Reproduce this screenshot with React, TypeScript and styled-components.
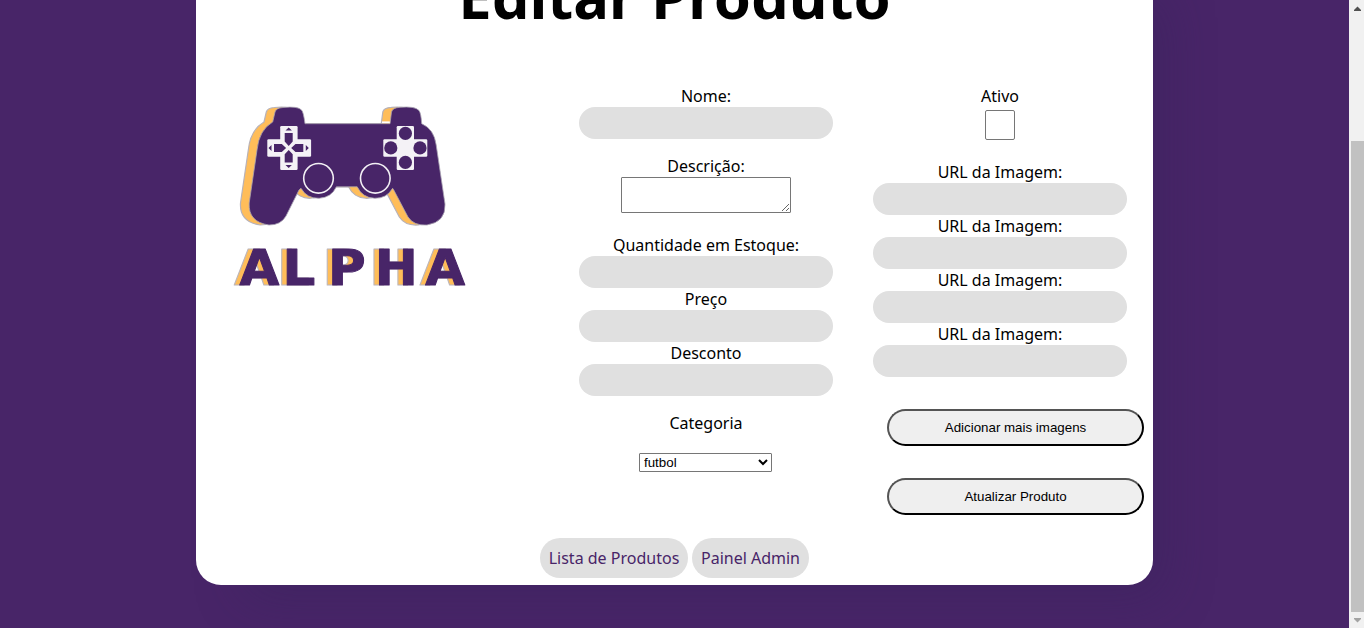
import React from 'react';
import styled, { createGlobalStyle } from 'styled-components';

const GlobalStyle = createGlobalStyle`
  * { box-sizing: border-box; }
  body {
    margin: 0;
    overflow: hidden;
    background: #482568;
    color: #000;
    font: 16px/22px "Noto Sans", sans-serif;
  }
`;

const Screen = styled.div`
  display: flex;
  height: 628px;
  overflow: hidden;
`;

const Page = styled.main`
  flex: 1;
  display: flex;
  justify-content: center;
  align-items: flex-start;
  overflow: hidden;
`;

const Card = styled.section`
  width: 957px;
  height: 635px;
  margin-top: -50px;
  background: #fff;
  border-radius: 25px;
  box-shadow: 30px 30px 50px -20px rgba(50, 35, 85, 0.35);
`;

const Title = styled.h1`
  margin: 0 0 44px;
  font-size: 59.7px;
  line-height: 91px;
  text-align: center;
`;

const Form = styled.form`
  display: flex;
  height: 453px;
`;

const LogoArea = styled.div`
  width: 383px;
  padding: 10px 0 0 29px;
`;

const Column = styled.div`
  display: flex;
  flex-direction: column;
  align-items: center;
  width: 254px;
  & + & { margin-left: 40px; }
`;

const Field = styled.label<{ $after?: number }>`
  display: flex;
  flex-direction: column;
  align-items: center;
  margin-bottom: ${(p) => p.$after ?? 0}px;
`;

const Input = styled.input`
  width: 254px;
  height: 32px;
  padding: 0 12px;
  border: 0;
  border-radius: 16px;
  background: #e0e0e0;
`;

const Description = styled.textarea`
  width: 170px;
  height: 36px;
  margin: 0;
  border: 1px solid #767676;
  border-radius: 1px;
`;

const Check = styled.input`
  width: 30px;
  height: 30px;
  margin: 3px 0 0;
  appearance: none;
  border: 1px solid #767676;
  border-radius: 2px;
`;

const Category = styled.select`
  width: 133px;
  height: 19px;
  margin: 19px 1px 0 0;
  border: 1px solid #767676;
  border-radius: 1px;
  background: #fff;
  color: #000;
  font: 13.333px "Liberation Sans", Arial, sans-serif;
`;

const Action = styled.button`
  flex: none;
  align-self: flex-start;
  width: 257px;
  height: 37px;
  margin: 32px 0 0 14px;
  border: 2px outset #000;
  border-radius: 20px;
  background: #efefef;
  color: #000;
  font: 13.333px "Liberation Sans", Arial, sans-serif;
`;

const Links = styled.nav`
  display: flex;
  justify-content: center;
  gap: 4px;
`;

const PillLink = styled.a<{ $width: number }>`
  width: ${(p) => p.$width}px;
  height: 40px;
  border-radius: 20px;
  background: #e0e0e0;
  color: #482568;
  line-height: 40px;
  text-align: center;
  white-space: nowrap;
  text-decoration: none;
`;

const ScrollTrack = styled.aside`
  display: flex;
  flex-direction: column;
  width: 15px;
  background: #f1f1f1;
`;

const ScrollArrow = styled.svg`
  display: block;
  flex: none;
`;

const ScrollThumb = styled.div`
  height: 471px;
  margin: 124px 0 0 2px;
  background: #c1c1c1;
`;

const controller =
  'M272.7 122 L275 112 Q276 108 283 107.5 Q298 106 301.5 110 Q303.5 112 305 123.7 H390 L391.5 112 Q392.5 107.7 400 107.3 Q415 106 419 110.5 Q421 113 421.7 123.7 Q434 129 436.2 145 L445 204 Q446 222 427 225 Q414 226 408 217 L393.5 189.5 L392.6 188.3 A20 20 0 0 1 357.2 186.8 H336.4 A20 20 0 0 1 301 188.3 L299 190 L286 216 Q281 225 269 225 Q248 222 249.2 203 L257 150 Q259 130 272.7 122 Z';

function Wordmark({ offset, fill, stroke }: { offset: number; fill: string; stroke: string }) {
  return (
    <text
      transform={`translate(${offset} 285) scale(1.05 1)`}
      x="228 269 312.5 357 405"
      y="0"
      fontFamily="DejaVu Sans"
      fontWeight="bold"
      fontSize="49"
      fill={fill}
      stroke={stroke}
      strokeWidth="1"
      strokeLinejoin="round"
    >
      ALPHA
    </text>
  );
}

function Logo() {
  return (
    <svg width="250" height="200" viewBox="225 95 250 200" role="img" aria-label="Alpha">
      <path d={controller} transform="translate(-8.7 0)" fill="#ffbd59" stroke="#b8b2b8" strokeWidth="1.2" />
      <path d={controller} fill="#482568" stroke="#aaa3b2" strokeWidth="0.8" />
      <path d="M382 121.4h7.8v1.7H382z" fill="#fff" />
      <g fill="#f4f2f6">
        <rect x="280.2" y="126" width="17.4" height="44" rx="1.2" />
        <rect x="267.3" y="139.2" width="43.8" height="17.6" rx="1.2" />
        <rect x="396.7" y="126" width="17.3" height="44" rx="1.2" />
        <rect x="383.3" y="139.2" width="44" height="17.6" rx="1.2" />
      </g>
      <g fill="#482568">
        <path d="M284.7 133h8v8.6l-4 4.3-4-4.3zM284.7 162.5h8v-8.2l-4-4.3-4 4.3zM274 144h7.8l4.3 4-4.3 4H274zM303.3 144h-7.8l-4.3 4 4.3 4h7.8z" />
        <path d="M285.5 130.6l3.2-3 3.2 3zM285.5 165l3.2 3 3.2-3zM271.5 145l-3 3 3 3zM305.8 145l3 3-3 3z" />
      </g>
      <g fill="#482568">
        <circle cx="405.4" cy="133.4" r="6.6" />
        <circle cx="390.8" cy="147.9" r="6.6" />
        <circle cx="420" cy="147.9" r="6.6" />
        <circle cx="405.4" cy="162.4" r="6.6" />
      </g>
      <g fill="none" stroke="#f2eff4" strokeWidth="1.6">
        <circle cx="318.5" cy="178.3" r="14.8" />
        <circle cx="375.3" cy="178.3" r="14.8" />
      </g>
      <Wordmark offset={-5.5} fill="#ffbd59" stroke="#bdb6ba" />
      <Wordmark offset={0} fill="#482568" stroke="#482568" />
    </svg>
  );
}

export default function App() {
  return (
    <>
      <GlobalStyle />
      <Screen>
        <Page>
          <Card>
            <Title>Editar Produto</Title>
            <Form>
              <LogoArea><Logo /></LogoArea>
              <Column>
                <Field $after={16}>Nome:<Input /></Field>
                <Field $after={21}>Descrição:<Description /></Field>
                <Field>Quantidade em Estoque:<Input /></Field>
                <Field>Preço<Input /></Field>
                <Field $after={16}>Desconto<Input /></Field>
                <Field>
                  Categoria
                  <Category><option>futbol</option></Category>
                </Field>
              </Column>
              <Column>
                <Field $after={21}>Ativo<Check type="checkbox" /></Field>
                {[1, 2, 3, 4].map((n) => (
                  <Field key={n}>URL da Imagem:<Input /></Field>
                ))}
                <Action type="button">Adicionar mais imagens</Action>
                <Action type="button">Atualizar Produto</Action>
              </Column>
            </Form>
            <Links>
              <PillLink $width={148}>Lista de Produtos</PillLink>
              <PillLink $width={117}>Painel Admin</PillLink>
            </Links>
          </Card>
        </Page>
        <ScrollTrack>
          <ScrollArrow width="15" height="17"><path d="M5 11h7v-1L8.5 6.5 5 10z" fill="#505050" /></ScrollArrow>
          <ScrollThumb />
          <ScrollArrow width="15" height="16"><path d="M5 6h7v1L8.5 10.5 5 7z" fill="#a3a3a3" /></ScrollArrow>
        </ScrollTrack>
      </Screen>
    </>
  );
}
